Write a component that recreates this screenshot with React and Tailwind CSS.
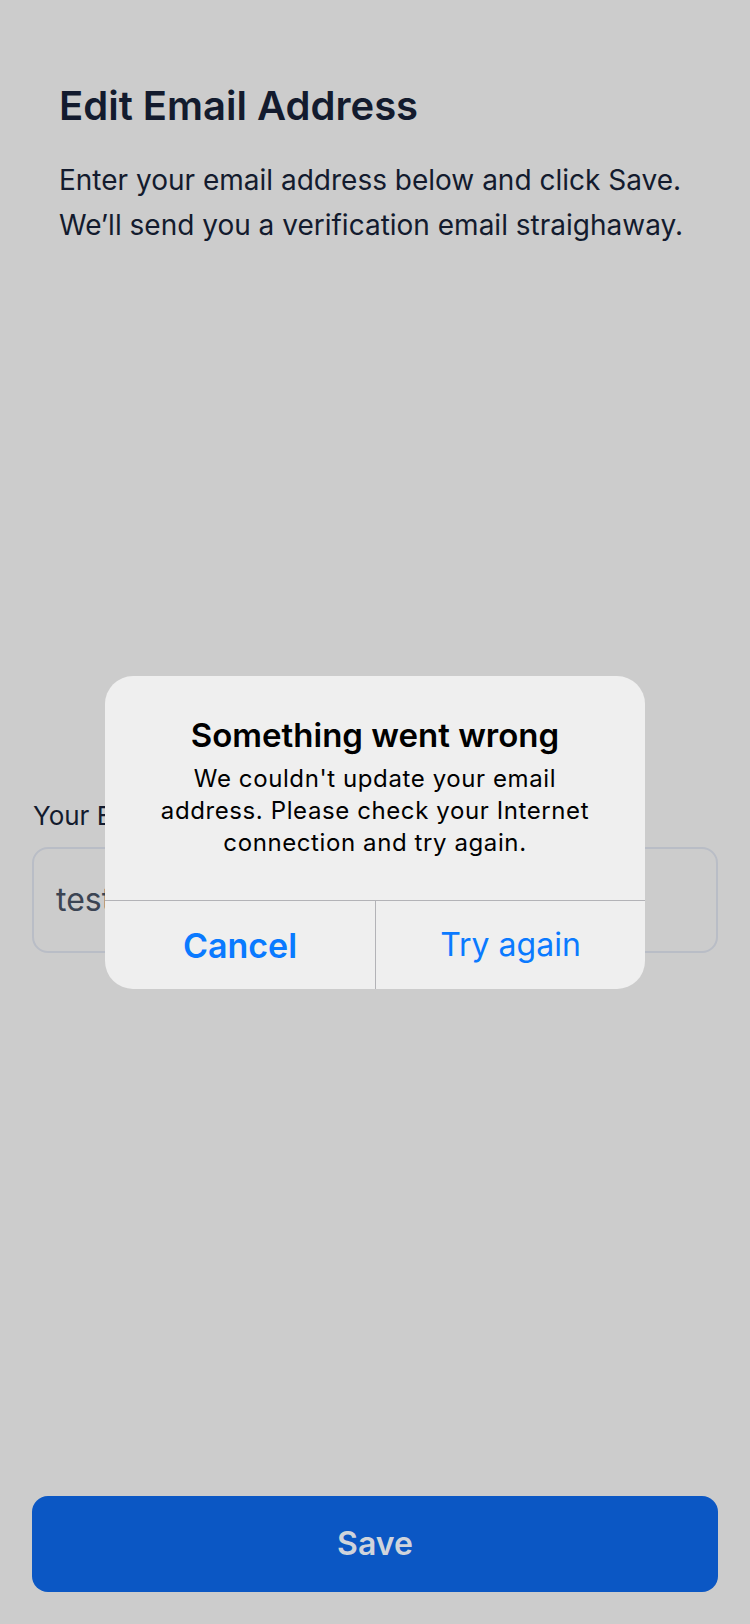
import React from "react";

const EditEmail = () => {
  return (
    <div className="flex flex-col h-[1624px] px-[32px]">
      <div className="px-[27px] pt-[82px]">
        <h1 className="text-[40px] leading-[48px] font-semibold text-[#131b2e]">
          Edit Email Address
        </h1>
        <p className="mt-[28px] text-[28px] leading-[45px] text-[#131b2e]">
          Enter your email address below and click Save.
          <br />
          We’ll send you a verification email straighaway.
        </p>
      </div>

      <div className="mt-[552px]">
        <label className="block pl-[1px] text-[26px] leading-[32px] text-[#131b2e]">
          Your Email Address
        </label>
        <div className="mt-[15px] flex items-center h-[106px] border-2 border-[#b9bdc6] rounded-[16px] pl-[22px]">
          <span className="text-[32px] text-[#3b4453]">test@example.com</span>
        </div>
      </div>

      <button className="mt-auto mb-[32px] h-[96px] w-full rounded-[16px] bg-[#0b57c4] text-[32px] font-semibold text-[#d0d4db]">
        Save
      </button>
    </div>
  );
};

const ErrorAlert = () => {
  return (
    <div className="absolute left-[105px] top-[676px] w-[540px] rounded-[28px] bg-[#efefef] text-black overflow-hidden">
      <div className="px-[46px] pt-[39px] pb-[41px] text-center">
        <h2 className="-mx-[20px] text-[33px] leading-[40px] font-semibold">Something went wrong</h2>
        <p className="mt-[8px] text-[24px] leading-[32px] tracking-[0.6px]">
          We couldn't update your email address. Please check your Internet connection and try again.
        </p>
      </div>
      <div className="grid grid-cols-2 border-t border-[#b3b3b7]">
        <button className="h-[88px] text-[34px] font-semibold text-[#0a7aff]">Cancel</button>
        <button className="h-[88px] text-[32px] text-[#0a7aff] border-l border-[#b3b3b7]">
          Try again
        </button>
      </div>
    </div>
  );
};

export default function App() {
  return (
    <div className="relative w-full min-h-[1624px] bg-[#cccccc] font-['Inter',sans-serif]">
      <EditEmail />
      <ErrorAlert />
    </div>
  );
}
